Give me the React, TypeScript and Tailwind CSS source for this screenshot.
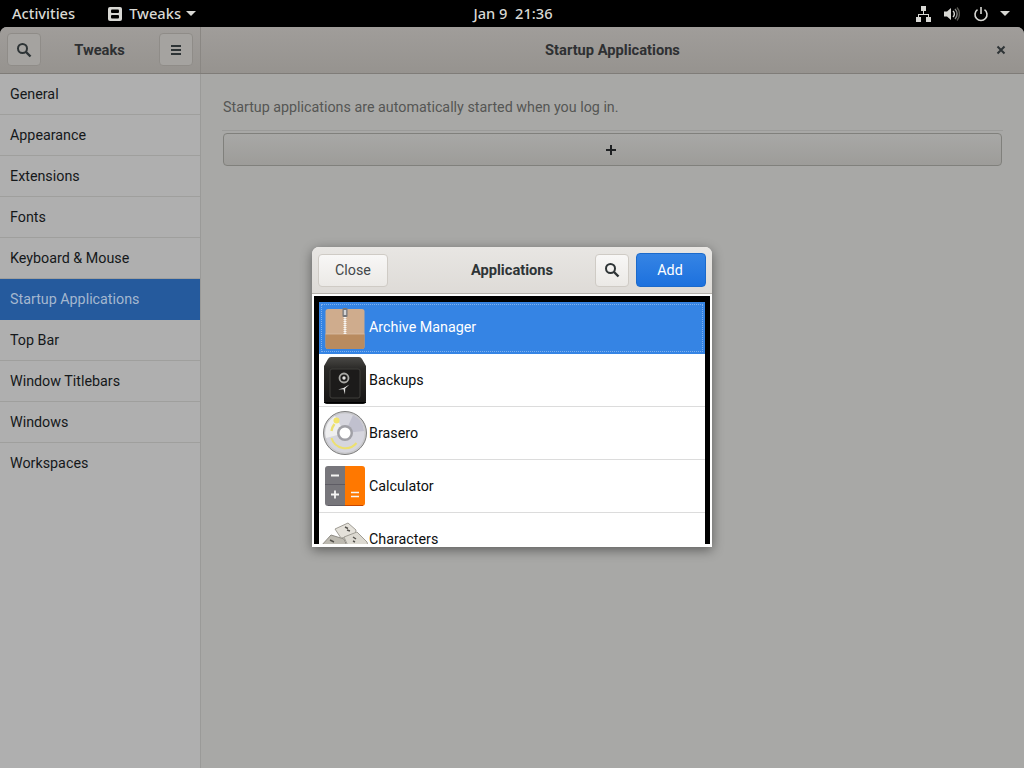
const uiFont = { fontFamily: 'Roboto, "Noto Sans", sans-serif' };
const shellFont = { fontFamily: '"Noto Sans", sans-serif' };

function SearchIcon({ color = "#2e3436" }: { color?: string }) {
  return (
    <svg width="16" height="16" viewBox="0 0 16 16" fill="none">
      <circle cx="6.500" cy="6.500" r="4.500" stroke={color} strokeWidth="2" />
      <path d="M10 10l4.500 4.500" stroke={color} strokeWidth="2.400" />
    </svg>
  );
}

function ArchiveIcon() {
  return (
    <svg width="40" height="41" viewBox="0 0 40 41">
      <rect x="0.500" y="1" width="39" height="40" rx="2.500" fill="#cfac8d" />
      <path d="M0.500 26h39v12.500a2.500 2.500 0 0 1-2.500 2.500H3a2.500 2.500 0 0 1-2.500-2.500z" fill="#b98b5f" />
      <path d="M0.500 26h39" stroke="#d9bea4" strokeWidth="0.800" />
      <rect x="17.500" y="0" width="5" height="9" rx="1" fill="#77777a" />
      <rect x="18.800" y="2" width="2.400" height="5" fill="#d6d6d6" />
      <path d="M20 9v17" stroke="#f1ede6" strokeWidth="3" strokeDasharray="1 1" />
      <path d="M20 9v17" stroke="#ffffff" strokeWidth="1" />
    </svg>
  );
}

function BackupsIcon() {
  return (
    <svg width="44" height="47" viewBox="0 0 44 47">
      <defs>
        <linearGradient id="safe" x1="0" y1="0" x2="0" y2="1">
          <stop offset="0" stopColor="#4a4946" />
          <stop offset="0.250" stopColor="#2b2a28" />
          <stop offset="1" stopColor="#161514" />
        </linearGradient>
      </defs>
      <path d="M8 0h28q2 0 3 2l4 7v35a3 3 0 0 1-3 3H4a3 3 0 0 1-3-3V9l4-7q1-2 3-2z" fill="url(#safe)" />
      <rect x="7" y="12" width="30" height="29" rx="2" fill="#1c1b1a" stroke="#3f3e3b" />
      <circle cx="21" cy="21" r="4.500" fill="none" stroke="#a8a8a4" strokeWidth="1.800" />
      <circle cx="21" cy="21" r="1.700" fill="#e2e2e0" />
      <path d="M20.500 31L15 32.500l5.500-.3L22 37.500l.2-6L26.500 27.500z" fill="#e2e2e0" />
      <path d="M1 45.500h42" stroke="#000" />
    </svg>
  );
}

function BraseroIcon() {
  return (
    <svg width="44" height="44" viewBox="0 0 44 44">
      <circle cx="22" cy="22" r="21.500" fill="#c9c9cc" stroke="#7d7d7d" />
      <circle cx="22" cy="22" r="19.500" fill="#d6d6de" />
      <path d="M22 22L30 4A19.500 19.500 0 0 1 41 20z" fill="#c0c0ce" />
      <path d="M22 22L3 27A19.500 19.500 0 0 1 12 5z" fill="#efeff0" />
      <path d="M8.500 27a14.500 14.500 0 0 0 25 5" fill="none" stroke="#ece070" strokeWidth="2" />
      <path d="M8.500 20a14 14 0 0 1 3-7" fill="none" stroke="#ece070" strokeWidth="2.400" />
      <circle cx="13.500" cy="9.500" r="3" fill="#f2e46a" />
      <circle cx="22" cy="22" r="8" fill="#a0a0a6" />
      <circle cx="22" cy="22" r="5.500" fill="#ffffff" />
    </svg>
  );
}

function CalculatorIcon() {
  return (
    <svg width="40" height="40" viewBox="0 0 40 40">
      <path d="M3 0h17v40H3a3 3 0 0 1-3-3V3a3 3 0 0 1 3-3z" fill="#77767b" />
      <path d="M20 0h17a3 3 0 0 1 3 3v34a3 3 0 0 1-3 3H20z" fill="#ff7800" />
      <path d="M0 18.500h20" stroke="#5e5c64" />
      <path d="M3 39.500h17" stroke="#5e5c64" />
      <path d="M20 39.500h18" stroke="#c64600" />
      <path d="M6 9.500h8M6 28.500h8M10 24.500v8" stroke="#f6f5f4" strokeWidth="1.800" />
      <path d="M26 26.500h8M26 30.500h8" stroke="#f6f5f4" strokeWidth="1.600" />
    </svg>
  );
}

function CharactersIcon() {
  return (
    <svg width="48" height="24" viewBox="0 0 48 24">
      <path d="M1 24L11 13l13 4 3 7z" fill="#bdbab1" stroke="#8f8c85" />
      <path d="M15 7L28 1l8 7-1 6-14 2z" fill="#e4e1da" stroke="#a09d95" />
      <path d="M24 15l13-5 10 10 1 4H28z" fill="#dcd9d1" stroke="#a09d95" />
      <path d="M25 5l3 1.500M27 8l3 1M33 15l3 2M33 19l2 1M10 18l4 2" stroke="#55534e" strokeWidth="1.400" />
    </svg>
  );
}

const apps: { name: string; icon: React.ReactNode }[] = [
  { name: "Backups", icon: <BackupsIcon /> },
  { name: "Brasero", icon: <BraseroIcon /> },
  { name: "Calculator", icon: <CalculatorIcon /> },
];

const items = ["General", "Appearance", "Extensions", "Fonts", "Keyboard & Mouse", "Startup Applications", "Top Bar", "Window Titlebars", "Windows", "Workspaces"];

export default function App() {
  return (
    <div className="relative w-[1024px] h-[768px] overflow-hidden flex flex-col bg-black text-[14.3px]" style={uiFont}>
      <div className="h-[27px] shrink-0 bg-black flex items-center text-[#d8d8d4] font-medium text-[14.67px]" style={shellFont}>
        <span className="ml-3 pb-[1px]">Activities</span>
        <svg className="ml-[33px]" width="14" height="14" viewBox="0 0 14 14">
          <rect x="0" y="0" width="14" height="14" rx="2" fill="#d8d8d4" />
          <rect x="3" y="2.500" width="8" height="3.500" rx="1" fill="#000" />
          <rect x="3" y="8" width="8" height="3.500" rx="1" fill="#000" />
        </svg>
        <span className="ml-[7px] pb-[1px]">Tweaks</span>
        <span className="ml-[5px] w-0 h-0 border-x-[5px] border-x-transparent border-t-[5px] border-t-[#d8d8d4]" />
        <span className="absolute left-0 right-0 top-0 h-[26px] flex items-center justify-center pl-[2px]">Jan 9&nbsp; 21:36</span>
        <div className="ml-auto mr-[14px] flex items-center relative">
          <svg width="16" height="16" viewBox="0 0 16 16" fill="#d8d8d4">
            <rect x="5" y="0" width="5" height="5" />
            <rect x="0" y="11" width="5" height="5" />
            <rect x="10" y="11" width="5" height="5" />
            <path d="M7 5h1v3h5v3h-1V9H3v2H2V8h5z" />
          </svg>
          <svg className="ml-[12px]" width="16" height="16" viewBox="0 0 16 16" fill="none">
            <path d="M0 5.500h3L7 2v12L3 10.500H0z" fill="#d8d8d4" />
            <path d="M9 5a4 4 0 0 1 0 6" stroke="#d8d8d4" strokeWidth="1.400" />
            <path d="M11 3a7 7 0 0 1 0 10" stroke="#8a8a88" strokeWidth="1.400" />
            <path d="M13 1.500a10 10 0 0 1 0 13" stroke="#55554f" strokeWidth="1.400" />
          </svg>
          <svg className="ml-[13px]" width="16" height="16" viewBox="0 0 16 16" fill="none">
            <path d="M4.500 3.600a6 6 0 1 0 7 0" stroke="#d8d8d4" strokeWidth="1.600" />
            <path d="M8 1v7" stroke="#d8d8d4" strokeWidth="1.600" />
          </svg>
          <span className="ml-[11px] w-0 h-0 border-x-[5px] border-x-transparent border-t-[5px] border-t-[#d8d8d4]" />
        </div>
      </div>

      <div className="flex-1 flex flex-col rounded-t-[7px] overflow-hidden bg-[#a8a8a6]">
        <div className="h-[47px] shrink-0 flex border-b border-[#7f7c78] bg-gradient-to-b from-[#a09d9a] to-[#96938f] text-[14.67px]">
          <div className="w-[201px] shrink-0 border-r border-[#8a8783] flex items-center justify-between px-[7px] text-[#2e3032] font-bold pb-[1px]">
            <button className="w-[34px] h-[33px] rounded-[4px] border border-[#8f8c88] bg-[#a5a3a0] flex items-center justify-center">
              <SearchIcon />
            </button>
            <span className="-ml-[1px]">Tweaks</span>
            <button className="w-[34px] h-[33px] rounded-[4px] border border-[#8f8c88] bg-[#a5a3a0] flex items-center justify-center">
              <svg width="14" height="12" viewBox="0 0 14 12" fill="#2e3436">
                <rect x="2" y="1" width="10" height="2" />
                <rect x="2" y="5" width="10" height="2" />
                <rect x="2" y="9" width="10" height="2" />
              </svg>
            </button>
          </div>
          <div className="flex-1 relative flex items-center justify-center font-bold text-[#2e3032] pb-[1px]">
            Startup Applications
            <svg className="absolute right-[18px] top-[18px]" width="10" height="10" viewBox="0 0 10 10">
              <path d="M1.500 1.500l7 7M8.500 1.500l-7 7" stroke="#2e3436" strokeWidth="2" />
            </svg>
          </div>
        </div>

        <div className="flex-1 flex min-h-0">
          <div className="w-[201px] shrink-0 bg-[#afafaf] border-r border-[#9a9a98] text-[#15181a]">
            {items.map((it, i) => (
              <div key={it} className={`h-[41px] flex items-center pl-[10px] ${i === 5 ? "bg-[#255a9d] text-[#a4b7cf] pt-[1px]" : i === 9 ? "pt-[1px]" : "border-b border-[#9f9f9d] pt-[2px]"}`}>
                {it}
              </div>
            ))}
          </div>
          <div className="flex-1 px-[22px] pt-[23px]">
            <div className="h-[20px] pt-[2px] flex items-center text-[#555654]">Startup applications are automatically started when you log in.</div>
            <div className="mt-[13px] border-t border-[#9b9b99] pt-[2px] -mx-px px-px">
              <div className="h-[33px] rounded-[4px] border border-[#80807c] bg-gradient-to-b from-[#a8a8a6] to-[#9d9c99] flex items-center justify-center pr-[3px]">
                <svg width="10" height="10" viewBox="0 0 10 10">
                  <path d="M5 0v10M0 5h10" stroke="#1f2123" strokeWidth="2" />
                </svg>
              </div>
            </div>
          </div>
        </div>
      </div>

      <div className="absolute left-[312px] top-[247px] w-[400px] h-[300px] rounded-t-[7px] overflow-hidden flex flex-col shadow-[0_3px_12px_rgba(0,0,0,0.45)] bg-white">
        <div className="h-[47px] shrink-0 flex items-center px-[6px] border-b border-[#b6b2ac] bg-gradient-to-b from-[#e8e6e3] to-[#dedbd7] relative text-[#2e3436]">
          <button className="w-[70px] h-[33px] pt-[2px] rounded-[4px] border border-[#cfcbc5] bg-gradient-to-b from-[#f8f7f6] to-[#ebe9e6] text-[#44484a]">Close</button>
          <span className="absolute left-0 right-0 text-center font-bold text-[14.67px] pointer-events-none">Applications</span>
          <button className="ml-auto w-[34px] h-[33px] rounded-[4px] border border-[#cfcbc5] bg-gradient-to-b from-[#f8f7f6] to-[#ebe9e6] flex items-center justify-center">
            <SearchIcon />
          </button>
          <button className="ml-[7px] w-[70px] h-[34px] pt-[1px] pr-[2px] rounded-[4px] border border-[#1b6acb] bg-gradient-to-b from-[#3584e4] to-[#1c71de] text-white">Add</button>
        </div>
        <div className="flex-1 min-h-0 border-x-[5px] border-t-[6px] border-black bg-white overflow-hidden mx-[2px] mt-[2px] mb-[3px] text-[#0d0f10]">
          <div className="h-[52px] bg-[#3584e4] flex items-center pl-[6px] text-white relative">
            <div className="absolute inset-[2px] border border-dotted border-[#7fb0ec]" />
            <ArchiveIcon />
            <span className="ml-[4px]">Archive Manager</span>
          </div>
          {apps.map((a) => (
            <div key={a.name} className="h-[53px] flex items-center border-b border-[#dcdcdc] pl-[4px]">
              <div className="w-[44px] flex justify-center"><div className="flex">{a.icon}</div></div>
              <span className="ml-[2px] pt-[2px]">{a.name}</span>
            </div>
          ))}
          <div className="h-[34px] flex items-start pl-[1px]">
            <div className="mt-[9px] shrink-0"><CharactersIcon /></div>
            <span className="mt-[16px] ml-[1px]">Characters</span>
          </div>
        </div>
      </div>
    </div>
  );
}
